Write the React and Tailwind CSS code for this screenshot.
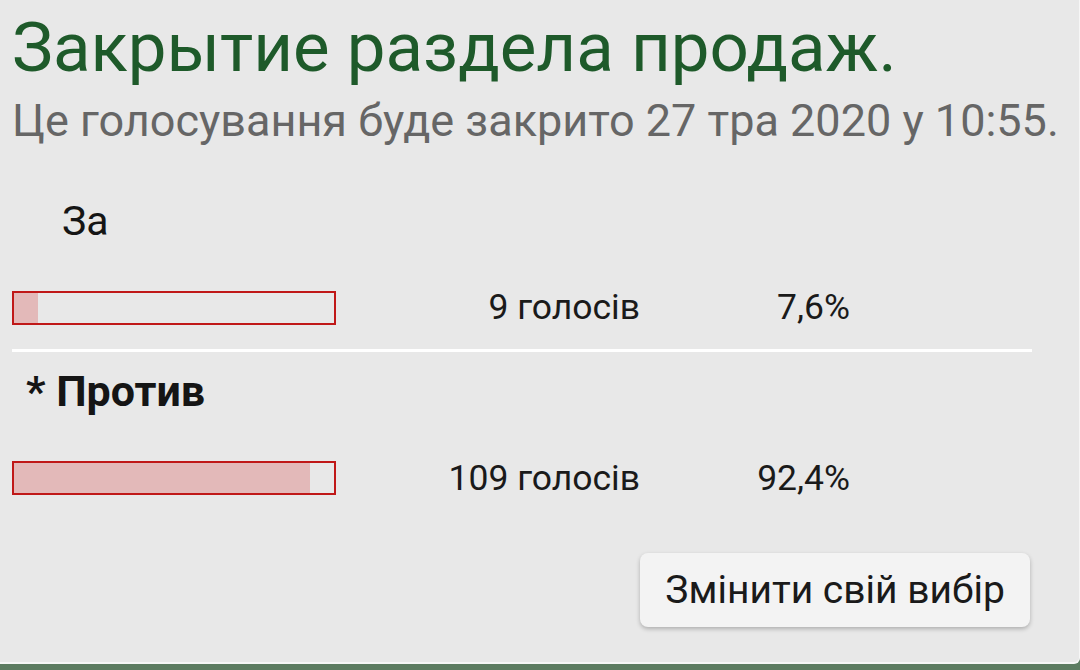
const options = [
  { label: 'За', votes: '9 голосів', pct: 7.6, pctLabel: '7,6%', chosen: false },
  { label: 'Против', votes: '109 голосів', pct: 92.4, pctLabel: '92,4%', chosen: true },
];

const Bar = ({ pct }) => (
  <div className="h-[34px] w-[324px] border-2 border-[#c01818] bg-[#e8e8e8]">
    <div className="h-full bg-[#e3b9b9]" style={{ width: `${pct}%` }} />
  </div>
);

const Option = ({ label, votes, pct, pctLabel, chosen }) => (
  <div>
    <div className="flex h-[34px] items-center leading-none text-[#151515]">
      {chosen ? (
        <span className="pl-[14px] text-[43px] font-bold">* {label}</span>
      ) : (
        <span className="pl-[50px] text-[41px]">{label}</span>
      )}
    </div>
    <div className="mt-[52px] flex items-center">
      <Bar pct={pct} />
      <div className="w-[304px] text-right text-[35.5px] leading-none text-[#1a1a1a]">{votes}</div>
      <div className="w-[210px] text-right text-[35.5px] leading-none text-[#1a1a1a]">{pctLabel}</div>
    </div>
  </div>
);

export default function App() {
  return (
    <div className="flex h-[670px] w-[1080px] flex-col overflow-hidden bg-[#5c7c61] font-['Roboto',sans-serif]">
      <div className="h-[664px] rounded-br-[6px] border-r border-b-[2px] border-[#f6f6f6] bg-[#e8e8e8] pl-[12px]">
        <h1 className="pt-[13px] text-[69px] leading-[69px] font-normal text-[#1e5a2a]">Закрытие раздела продаж.</h1>
        <p className="mt-[16px] text-[45px] leading-[45px] text-[#666666]">Це голосування буде закрито 27 тра 2020 у 10:55.</p>

        <div className="mt-[61px] w-[1020px]">
          <Option {...options[0]} />
          <div className="mt-[23px] mb-[23px] h-[3px] w-full bg-white" />
          <Option {...options[1]} />
        </div>

        <div className="mt-[57px] flex w-[1018px] justify-end">
          <button className="h-[74px] rounded-[8px] bg-[#f3f3f3] px-[25px] text-[39px] leading-none text-[#1a1a1a] shadow-[0_2px_4px_rgba(0,0,0,0.25)]">
            Змінити свій вибір
          </button>
        </div>
      </div>
    </div>
  );
}
